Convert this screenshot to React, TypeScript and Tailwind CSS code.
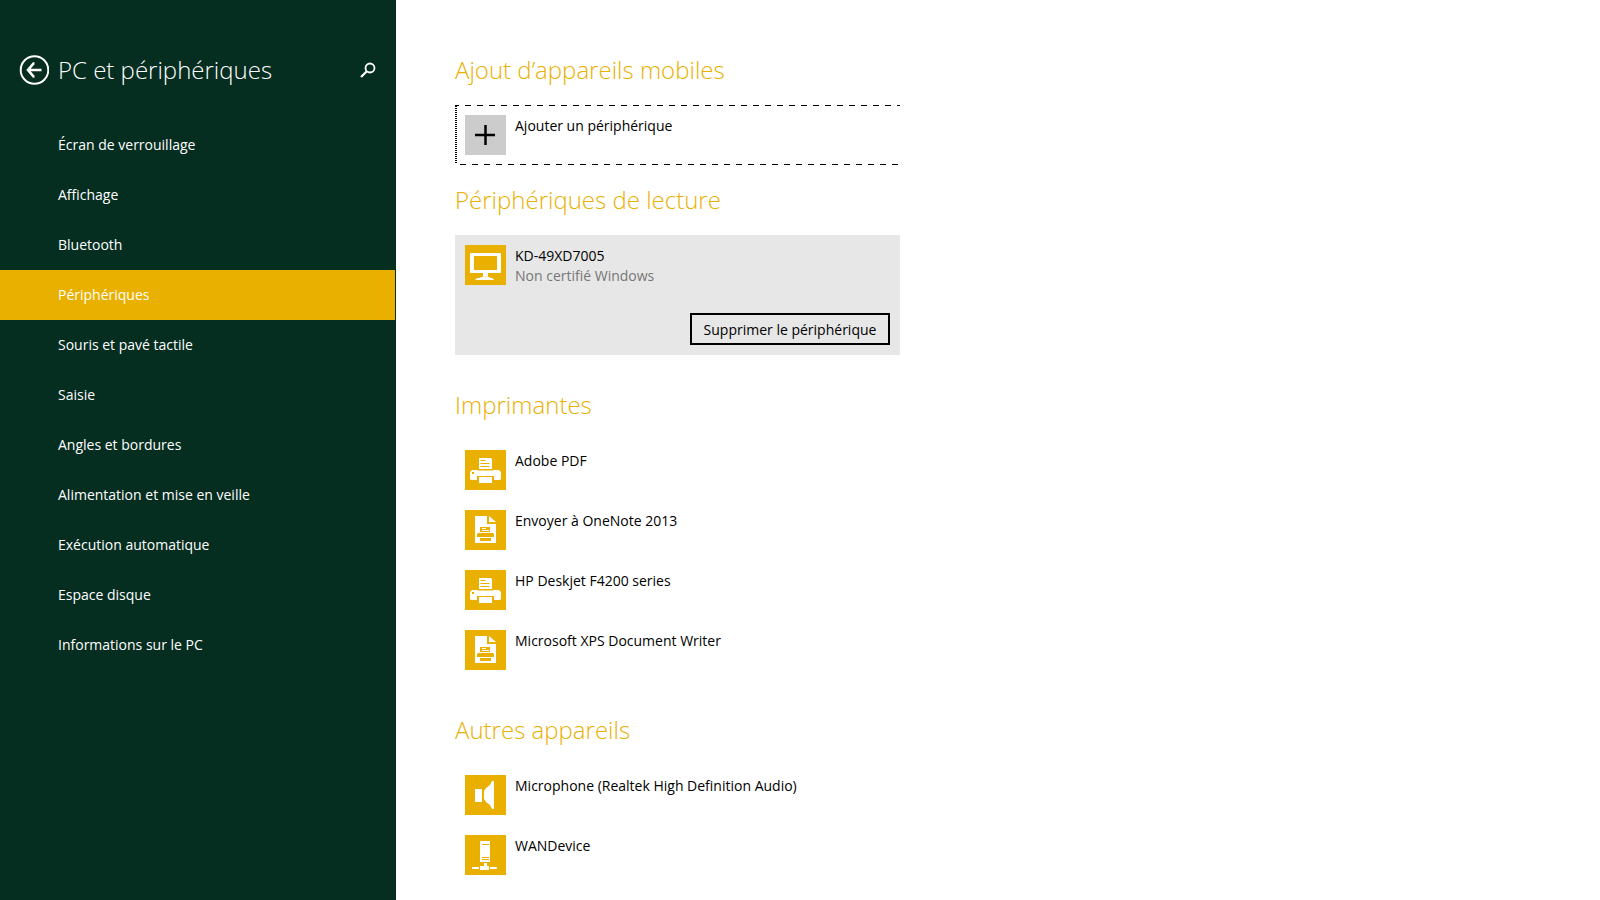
import { useState } from "react";

const navItems = [
    "Écran de verrouillage",
    "Affichage",
    "Bluetooth",
    "Périphériques",
    "Souris et pavé tactile",
    "Saisie",
    "Angles et bordures",
    "Alimentation et mise en veille",
    "Exécution automatique",
    "Espace disque",
    "Informations sur le PC",
];

type IconName = "display" | "printer" | "document" | "speaker" | "network";

const printers: { name: string; icon: IconName }[] = [
    { name: "Adobe PDF", icon: "printer" },
    { name: "Envoyer à OneNote 2013", icon: "document" },
    { name: "HP Deskjet F4200 series", icon: "printer" },
    { name: "Microsoft XPS Document Writer", icon: "document" },
];

const otherDevices: { name: string; icon: IconName }[] = [
    { name: "Microphone (Realtek High Definition Audio)", icon: "speaker" },
    { name: "WANDevice", icon: "network" },
];

function DeviceIcon({ name }: { name: IconName }) {
    return (
        <span className="block h-10 w-[41px] shrink-0 bg-[#eab000] text-white">
            <svg viewBox="0 0 41 40" className="h-10 w-[41px]" fill="currentColor" aria-hidden="true">
                {name === "display" && (
                    <>
                        <path fillRule="evenodd" d="M6 8h29c.6 0 1 .4 1 1v18c0 .6-.4 1-1 1H6c-.6 0-1-.4-1-1V9c0-.6.4-1 1-1zm3 3v14h23V11z" />
                        <path d="M18 28h5v3.500h-5z" />
                        <path d="M10 35c1-1.500 3-2 5-2.200l3-1.300h5l2 1.300c2 .2 3.500.7 4 2.200z" />
                    </>
                )}
                {name === "printer" && (
                    <>
                        <path fillRule="evenodd" d="M14 8h12l1 1v10H14zM15.500 10v1h5v-1zm0 3v1h9v-1zm0 3v1h9v-1z" />
                        <path fillRule="evenodd" d="M7 20h5l1 .5h15l1-.5h5l2 2v7l-1 1h-6v-4H12v4H6l-1-1v-7zM7 22v2h2v-2z" />
                        <path d="M14 27h13v6H14z" />
                    </>
                )}
                {name === "document" && (
                    <>
                        <path d="M10 6h12v8h9v19H10z" />
                        <path d="M24 6v6h7z" />
                        <path className="text-[#eab000]" d="M15 17h10v5H15zM12 24l1-1h15l1 1v3h-3v4H15v-4h-3z" />
                        <path d="M17 18h4v1h-4zM17 20h7v1h-7zM15 22h11v1H15zM14 27h13v1H14z" />
                    </>
                )}
                {name === "speaker" && (
                    <>
                        <path d="M10 14h7v13h-7z" />
                        <path d="M29 6v28h-2l-2-4-4-3-2-3v-8l2-3 4-3 2-4z" />
                    </>
                )}
                {name === "network" && (
                    <>
                        <path fillRule="evenodd" d="M15 6h10v21H15zM17 9v1h7V9zm0 13v1h7v-1zm0 2v1h7v-1z" />
                        <path d="M19 28h3v3h2v4h-9v-4h4zM7 32h7v2H7zM25 32h7v2h-7z" />
                    </>
                )}
            </svg>
        </span>
    );
}

function SectionTitle({ children }: { children: string }) {
    return <h2 className="h-[50px] text-2xl leading-[30px] font-light text-[#eab000]">{children}</h2>;
}

function DeviceList({ devices }: { devices: { name: string; icon: IconName }[] }) {
    return (
        <ul>
            {devices.map((device) => (
                <li key={device.name}>
                    <button className="flex w-full gap-[9px] p-2.5 text-left">
                        <DeviceIcon name={device.icon} />
                        <span className="pt-px">{device.name}</span>
                    </button>
                </li>
            ))}
        </ul>
    );
}

export default function App() {
    const [active, setActive] = useState("Périphériques");

    return (
        <div className="flex min-h-screen bg-white font-['Open_Sans','Noto_Sans',sans-serif] text-[14px] leading-5 text-black">
            {/* Sidebar */}
            <aside className="w-[396px] shrink-0 bg-[#052d20] pr-px text-white">
                <header className="flex h-[120px] items-start px-[19px] pt-[52px]">
                    <button aria-label="Retour" className="mt-[3px]">
                        <svg viewBox="0 0 30 30" className="size-[30px]" fill="none" stroke="currentColor" aria-hidden="true">
                            <circle cx="15.500" cy="15" r="13.800" strokeWidth="2" />
                            <path d="M22.500 15h-13M15.500 8.500h-1L9 15l5.500 6.500h1" strokeWidth="2.600" />
                        </svg>
                    </button>
                    <h1 className="ml-[9px] flex-1 text-2xl leading-9 font-light">PC et périphériques</h1>
                    <button aria-label="Rechercher" className="mt-[10px]">
                        <svg viewBox="0 0 16 16" className="size-4" fill="none" stroke="currentColor" aria-hidden="true">
                            <circle cx="10" cy="6" r="4.500" strokeWidth="1.800" />
                            <path d="M6.800 9.200L1 15" strokeWidth="2.200" />
                        </svg>
                    </button>
                </header>

                <nav>
                    {navItems.map((item) => (
                        <a
                            key={item}
                            href="#"
                            onClick={() => setActive(item)}
                            className={`flex h-[50px] items-center pl-[58px] ${item === active ? "bg-[#eab000]" : ""}`}
                        >
                            {item}
                        </a>
                    ))}
                </nav>
            </aside>

            {/* Content */}
            <main className="flex-1 px-[59px] pt-[55px]">
                <div className="max-w-[445px]">
                    <section>
                        <SectionTitle>Ajout d’appareils mobiles</SectionTitle>
                        <button className="flex w-full flex-col text-left">
                            <span className="h-px w-full bg-[linear-gradient(90deg,#000_6px,transparent_6px)] bg-[length:12px_1px] bg-[position:-2px_0]" />
                            <span className="flex w-full">
                                <span className="w-[2px] bg-[linear-gradient(#000_1px,transparent_1px)] bg-[length:2px_2px]" />
                                <span className="flex gap-[9px] py-[9px] pl-2">
                                    <span className="flex h-10 w-[41px] shrink-0 items-center justify-center bg-[#ccc] pr-px">
                                        <svg viewBox="0 0 20 20" className="size-5" aria-hidden="true">
                                            <path d="M10.500 0v20M0 10h20" stroke="currentColor" strokeWidth="2.500" />
                                        </svg>
                                    </span>
                                    <span className="pt-px">Ajouter un périphérique</span>
                                </span>
                            </span>
                            <span className="h-px w-full bg-[linear-gradient(90deg,#000_6px,transparent_6px)] bg-[length:12px_1px] bg-[position:5px_0]" />
                        </button>
                    </section>

                    <section className="pt-5">
                        <SectionTitle>Périphériques de lecture</SectionTitle>
                        <div className="bg-[#e7e7e7] p-2.5">
                            <div className="flex gap-[9px]">
                                <DeviceIcon name="display" />
                                <div className="pt-px">
                                    <p>KD-49XD7005</p>
                                    <p className="text-[#767676]">Non certifié Windows</p>
                                </div>
                            </div>
                            <div className="mt-[27px] flex justify-end">
                                <button className="h-8 w-[200px] border-2 border-black pt-px font-medium">Supprimer le périphérique</button>
                            </div>
                        </div>
                    </section>

                    <section className="pt-[35px]">
                        <SectionTitle>Imprimantes</SectionTitle>
                        <DeviceList devices={printers} />
                    </section>

                    <section className="pt-[35px]">
                        <SectionTitle>Autres appareils</SectionTitle>
                        <DeviceList devices={otherDevices} />
                    </section>
                </div>
            </main>
        </div>
    );
}
